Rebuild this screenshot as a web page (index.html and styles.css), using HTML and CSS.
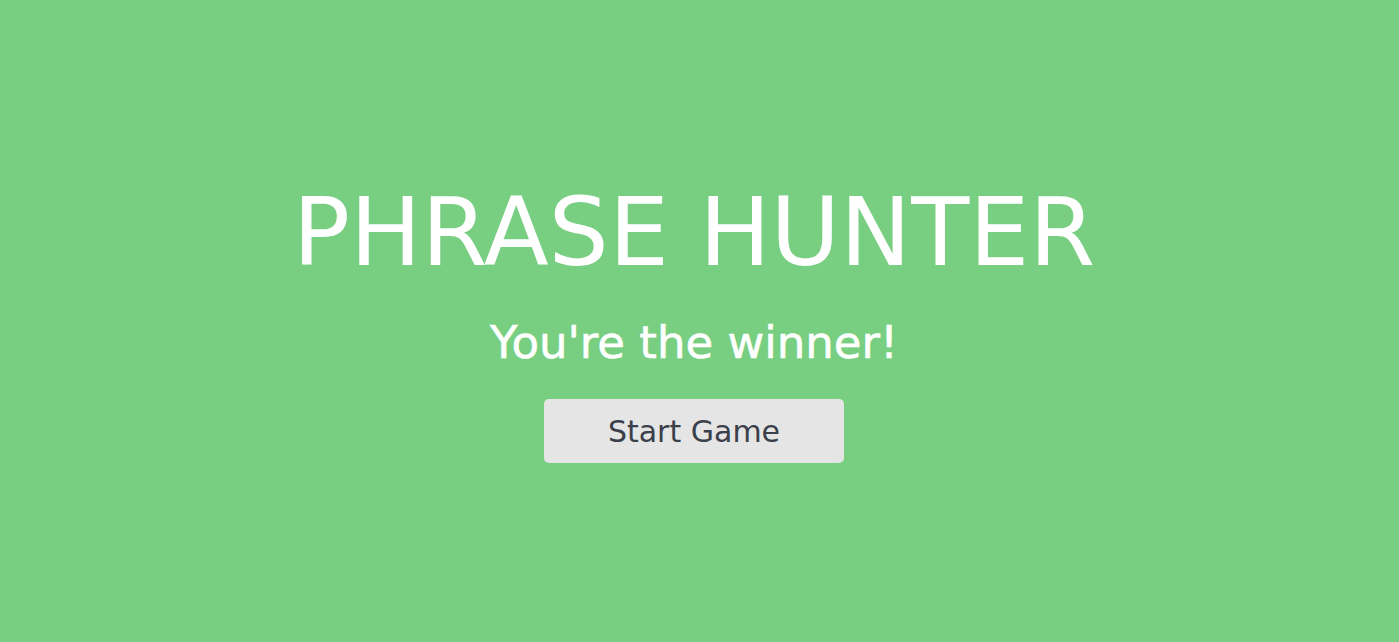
FILE: index.html
```html
<!DOCTYPE html>
<html lang="en">
<head>
<meta charset="utf-8">
<title>Phrase Hunter</title>
<link rel="stylesheet" href="styles.css">
</head>
<body>
<div class="overlay">
  <h2 class="title">PHRASE HUNTER</h2>
  <h1 class="message">You're the winner!</h1>
  <button class="btn-reset">Start Game</button>
</div>
</body>
</html>
```
FILE: styles.css
```css
html, body {
  margin: 0;
  padding: 0;
  height: 100%;
}
body {
  font-family: "DejaVu Sans", "Open Sans", sans-serif;
  background: #78cf82;
}
.overlay {
  height: 100%;
  box-sizing: border-box;
  padding: 6px 11px 0 0;
  display: flex;
  flex-direction: column;
  align-items: center;
  justify-content: center;
  color: #fff;
}
.title {
  margin: 0;
  font-size: 95px;
  font-weight: 400;
  line-height: 1;
}
.message {
  margin: 40px 0 0;
  font-size: 45px;
  font-weight: 400;
  line-height: 1;
  -webkit-text-stroke: 0.6px #fff;
}
.btn-reset {
  margin-top: 34px;
  width: 300px;
  height: 64px;
  border: none;
  border-radius: 5px;
  background: #e5e5e5;
  color: #3a3f4a;
  font-family: inherit;
  font-size: 30px;
}
```
